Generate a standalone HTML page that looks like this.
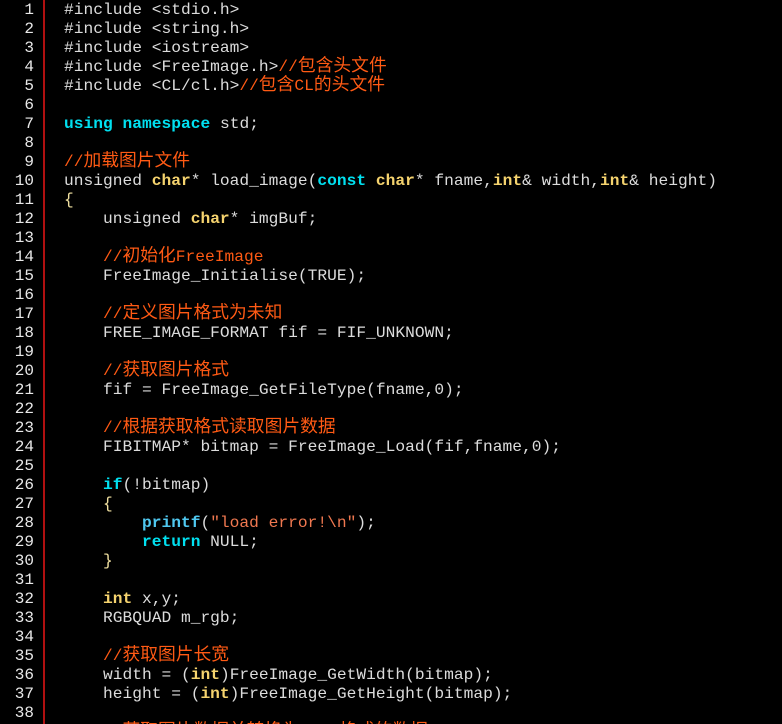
<!DOCTYPE html>
<html><head><meta charset="utf-8"><style>
html,body{margin:0;background:#000;width:782px;height:724px;overflow:hidden;}
body{position:relative;font-family:"Liberation Mono","Noto Sans CJK SC",monospace;font-size:16px;}
#g{position:absolute;left:0;top:0;width:43px;height:724px;background:#000;}
#bar{position:absolute;left:43px;top:0;width:2px;height:724px;background:#b01010;}
.ln{position:absolute;left:0;width:34px;text-align:right;color:#e8e8e8;height:19px;line-height:19px;}
.c{position:absolute;left:64px;color:#dcdcdc;white-space:pre;height:19px;line-height:19px;transform:scaleX(1.015);transform-origin:0 0;}
.k{color:#f5d36e;font-weight:bold}
.b{color:#00e0f0;font-weight:bold}
.f{color:#4fc8f0;font-weight:bold}
.m{color:#ff5a14}
.s{color:#f07850}
.y{color:#f0e0a0}
.z{font-size:17.5px}
</style></head><body>
<div id="g"></div><div id="bar"></div>
<div id="lines"></div>
<script>
const L=[
'#include &lt;stdio.h&gt;',
'#include &lt;string.h&gt;',
'#include &lt;iostream&gt;',
'#include &lt;FreeImage.h&gt;<span class="m">//<span class="z">包含头文件</span></span>',
'#include &lt;CL/cl.h&gt;<span class="m">//<span class="z">包含</span>CL<span class="z">的头文件</span></span>',
'',
'<span class="b">using</span> <span class="b">namespace</span> std;',
'',
'<span class="m">//<span class="z">加载图片文件</span></span>',
'unsigned <span class="k">char</span>* load_image(<span class="b">const</span> <span class="k">char</span>* fname,<span class="k">int</span>&amp; width,<span class="k">int</span>&amp; height)',
'<span class="y">{</span>',
'    unsigned <span class="k">char</span>* imgBuf;',
'',
'    <span class="m">//<span class="z">初始化</span>FreeImage</span>',
'    FreeImage_Initialise(TRUE);',
'',
'    <span class="m">//<span class="z">定义图片格式为未知</span></span>',
'    FREE_IMAGE_FORMAT fif = FIF_UNKNOWN;',
'',
'    <span class="m">//<span class="z">获取图片格式</span></span>',
'    fif = FreeImage_GetFileType(fname,0);',
'',
'    <span class="m">//<span class="z">根据获取格式读取图片数据</span></span>',
'    FIBITMAP* bitmap = FreeImage_Load(fif,fname,0);',
'',
'    <span class="b">if</span>(!bitmap)',
'    <span class="y">{</span>',
'        <span class="f">printf</span>(<span class="s">"load error!\\n"</span>);',
'        <span class="b">return</span> NULL;',
'    <span class="y">}</span>',
'',
'    <span class="k">int</span> x,y;',
'    RGBQUAD m_rgb;',
'',
'    <span class="m">//<span class="z">获取图片长宽</span></span>',
'    width = (<span class="k">int</span>)FreeImage_GetWidth(bitmap);',
'    height = (<span class="k">int</span>)FreeImage_GetHeight(bitmap);',
'',
'    <span class="m">//<span class="z">获取图片数据并转换为</span>RGBA<span class="z">格式的数据</span></span>'
];
let h='';
L.forEach((t,i)=>{const y=1+i*19;
 if(i<38)h+=`<div class="ln" style="top:${y}px">${i+1}</div>`;
 h+=`<div class="c" style="top:${y}px">${t}</div>`;});
document.getElementById('lines').innerHTML=h;
</script>
</body></html>
